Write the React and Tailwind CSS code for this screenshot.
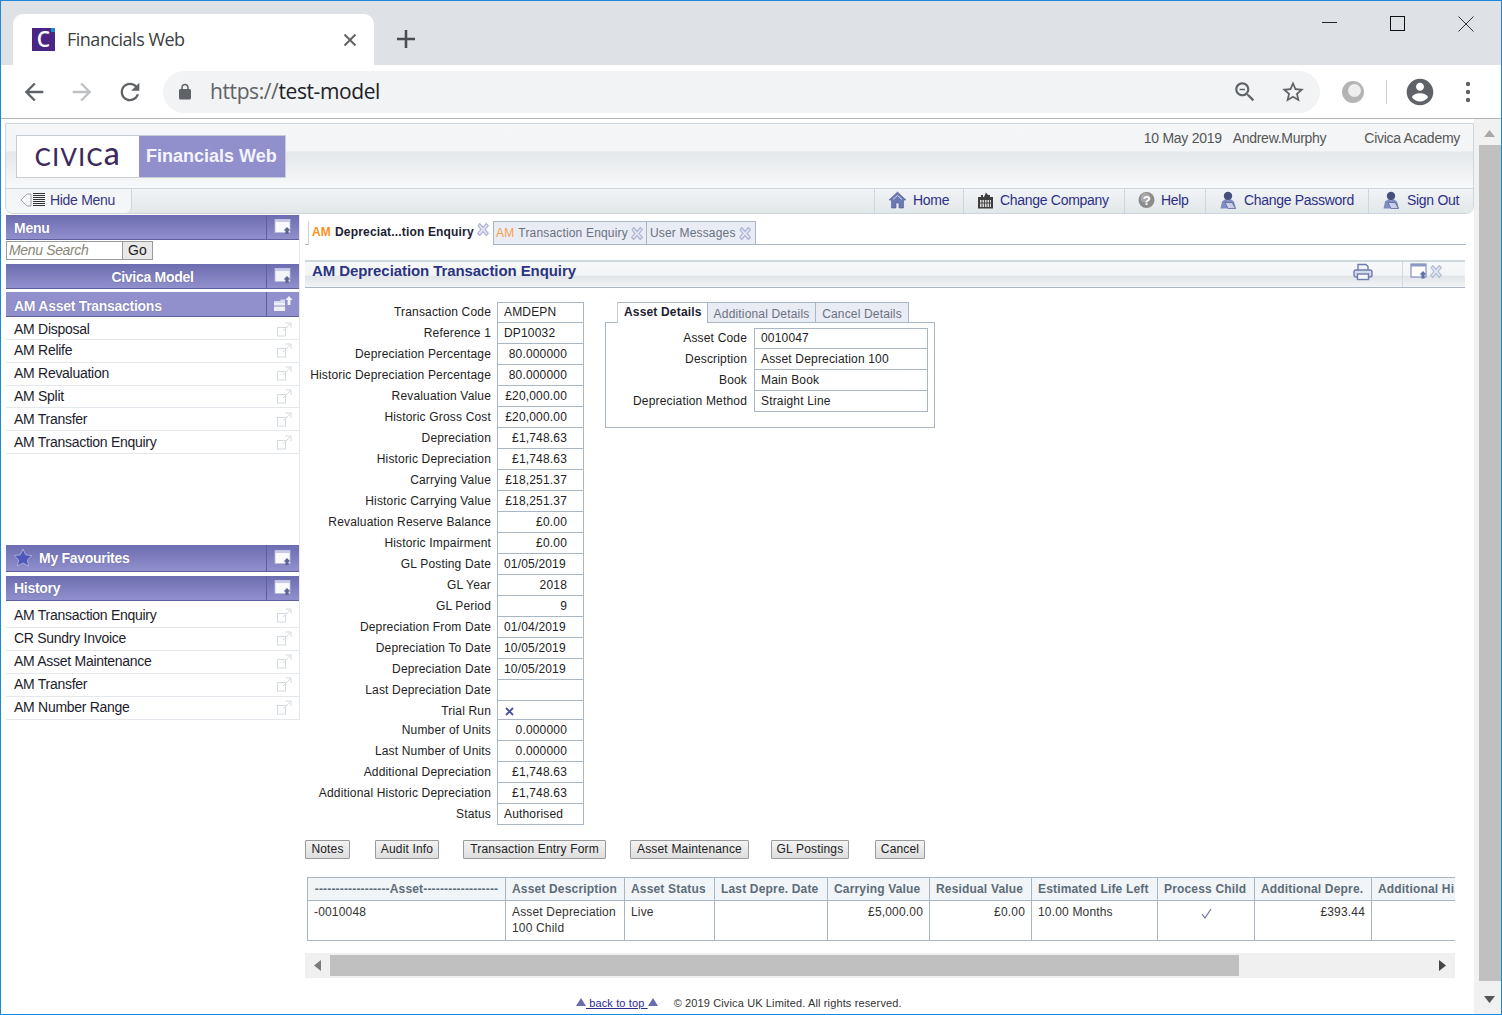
import React from "react";

const P = ({ d, c = "#5f6368", s = 24, className = "" }) => (
  <svg width={s} height={s} viewBox="0 0 24 24" className={className} fill={c}><path d={d} /></svg>
);
const paths = {
  back: "M20 11H7.83l5.59-5.59L12 4l-8 8 8 8 1.41-1.41L7.83 13H20v-2z",
  fwd: "M4 11h12.17l-5.59-5.59L12 4l8 8-8 8-1.41-1.41L16.17 13H4v-2z",
  reload: "M17.65 6.35C16.2 4.9 14.21 4 12 4c-4.42 0-7.99 3.58-7.99 8s3.57 8 7.99 8c3.73 0 6.84-2.55 7.73-6h-2.08c-.82 2.33-3.04 4-5.65 4-3.31 0-6-2.69-6-6s2.69-6 6-6c1.66 0 3.14.69 4.22 1.78L13 11h7V4l-2.35 2.35z",
  lock: "M18 8h-1V6c0-2.76-2.24-5-5-5S7 3.24 7 6v2H6c-1.1 0-2 .9-2 2v10c0 1.1.9 2 2 2h12c1.1 0 2-.9 2-2V10c0-1.1-.9-2-2-2zM9 6c0-1.66 1.34-3 3-3s3 1.34 3 3v2H9V6z",
  zoom: "M15.5 14h-.79l-.28-.27C15.41 12.59 16 11.11 16 9.5 16 5.91 13.09 3 9.5 3S3 5.91 3 9.5 5.91 16 9.5 16c1.61 0 3.09-.59 4.23-1.57l.27.28v.79l5 4.99L20.49 19l-4.99-5zm-6 0C7.01 14 5 11.99 5 9.5S7.01 5 9.5 5 14 7.01 14 9.5 11.99 14 9.5 14zM7 9h5v1.4H7z",
  star: "M22 9.24l-7.19-.62L12 2 9.19 8.63 2 9.24l5.46 4.73L5.82 21 12 17.27 18.18 21l-1.63-7.03L22 9.24zM12 15.4l-3.76 2.27 1-4.28-3.32-2.88 4.38-.38L12 6.1l1.71 4.04 4.38.38-3.32 2.88 1 4.28L12 15.4z",
  account: "M12 2C6.48 2 2 6.48 2 12s4.48 10 10 10 10-4.48 10-10S17.52 2 12 2zm0 3c1.66 0 3 1.34 3 3s-1.34 3-3 3-3-1.34-3-3 1.34-3 3-3zm0 14.2c-2.5 0-4.71-1.28-6-3.22.03-1.99 4-3.08 6-3.08 1.99 0 5.97 1.09 6 3.08-1.29 1.94-3.5 3.22-6 3.22z",
};

const WinIcon = ({ dark = false }) => (
  <svg width="18" height="18" viewBox="0 0 18 18">
    <rect x="1" y="1.5" width="15" height="13" fill={dark ? "#f4f5fb" : "#fbfbfe"} stroke="#b9bbdc" strokeWidth="0.8" />
    <rect x="1" y="1.5" width="15" height="2.6" fill="#c9cae6" />
    <path d="M13 9l3.5 3.5H14.6V16h-3.2v-3.5H9.5z" fill="#5f6496" />
  </svg>
);
const FolderUp = () => (
  <svg width="20" height="18" viewBox="0 0 20 18">
    <path d="M1 6h6l1-1.5h4V16H1z" fill="#d9dcec" />
    <path d="M1 8h11v8H1z" fill="#eef0f7" />
    <path d="M1 11h11" stroke="#8f92c0" />
    <path d="M16 1l3.6 4H17.4v5h-2.8V5h-2.2z" fill="#f3f4fb" />
  </svg>
);
const ExtIcon = () => (
  <svg width="15" height="15" viewBox="0 0 15 15" fill="none" stroke="#d3dae3" strokeWidth="1">
    <rect x="0.5" y="5.5" width="8" height="8.5" />
    <path d="M6 9l7.5-7.5M8.5 1H14v5" />
  </svg>
);
const CloseX = ({ c = "#a9afd0" }) => (
  <svg width="12" height="13" viewBox="0 0 11 12" fill="#e3e5f1" stroke={c} strokeWidth="1">
    <path d="M1 2.500l1.500-2L5.500 4l3-3.500 2 2L7.500 6l3 3.500-2 2L5.500 8l-3 3.500-2-2L3.500 6z" />
  </svg>
);

const NavIcon = ({ kind }) => {
  if (kind === "home")
    return (
      <svg width="19" height="18" viewBox="0 0 19 18">
        <path d="M9.500 1L1 9h2.500v8h4.500v-5h3v5h4.500V9H18z" fill="#6b79b4" stroke="#4f5c9a" strokeWidth="0.6" />
        <path d="M5 8.500l4.500-4 4.500 4" fill="none" stroke="#d5daf0" strokeWidth="1" />
      </svg>
    );
  if (kind === "company")
    return (
      <svg width="17" height="18" viewBox="0 0 17 18">
        <path d="M1 6h3V4h2V6h1l2-4.500L11 4h2v2h3v11.500H1z" fill="#3f3f3f" />
        <path d="M3 9h11v7H3z" fill="#d8d8d8" />
        <path d="M5 9v7M7.500 9v7M10 9v7M12.500 9v7M3 12h11" stroke="#3f3f3f" strokeWidth="0.9" />
      </svg>
    );
  if (kind === "help")
    return (
      <svg width="17" height="18" viewBox="0 0 17 18">
        <circle cx="8.500" cy="9" r="8" fill="#8b8b8b" />
        <circle cx="7.500" cy="7" r="5" fill="#a9a9a9" />
        <text x="8.500" y="13.500" textAnchor="middle" fontSize="13" fontWeight="700" fontFamily="Liberation Sans" fill="#fff">?</text>
      </svg>
    );
  return (
    <svg width="19" height="19" viewBox="0 0 19 19">
      <circle cx="9" cy="5" r="4.200" fill="#46507f" />
      <path d="M1.500 17.500l1.500-7 3.500-2.500 2.500 1.500L11.500 8l3.500 2.500 2 7z" fill="#7f8cc2" />
      <path d="M6 11.500h7l3.500 6H9z" fill="#c8cfe6" stroke="#46507f" strokeWidth="0.6" />
    </svg>
  );
};

const SideHead = ({ children, flat = false, center = false, icon, h = "h-[25px]", pt = "pt-[2px]" }) => (
  <div className={`${h} relative flex items-stretch border-b border-[#5e5f9c] text-white font-bold text-[14px] tracking-[-0.28px] ${flat ? "bg-[#9190cc]" : "bg-[linear-gradient(#6c6db0,#9190cd)]"}`}>
    <div className={`flex-1 flex items-center ${pt} ${center ? "justify-center pl-[33px]" : "pl-[8px]"} [text-shadow:0_0_1px_#55568f]`}>{children}</div>
    <div className="w-[33px] flex items-center justify-center border-l border-[#5e5f9c]">{icon || <WinIcon />}</div>
  </div>
);

const SideItem = ({ t, pt = "" }) => (
  <div className={`h-[23px] flex items-center justify-between pl-[8px] pr-[7px] ${pt} border-b border-[#e3e8ec] text-[14px] text-[#1c1c2c] tracking-[-0.28px]`}>
    <span>{t}</span>
    <ExtIcon />
  </div>
);

const rows = [
  ["Transaction Code", "AMDEPN", "l"],
  ["Reference 1", "DP10032", "l"],
  ["Depreciation Percentage", "80.000000", "r"],
  ["Historic Depreciation Percentage", "80.000000", "r"],
  ["Revaluation Value", "£20,000.00", "r"],
  ["Historic Gross Cost", "£20,000.00", "r"],
  ["Depreciation", "£1,748.63", "r"],
  ["Historic Depreciation", "£1,748.63", "r"],
  ["Carrying Value", "£18,251.37", "r"],
  ["Historic Carrying Value", "£18,251.37", "r"],
  ["Revaluation Reserve Balance", "£0.00", "r"],
  ["Historic Impairment", "£0.00", "r"],
  ["GL Posting Date", "01/05/2019", "l"],
  ["GL Year", "2018", "r"],
  ["GL Period", "9", "r"],
  ["Depreciation From Date", "01/04/2019", "l"],
  ["Depreciation To Date", "10/05/2019", "l"],
  ["Depreciation Date", "10/05/2019", "l"],
  ["Last Depreciation Date", "", "l"],
  ["Trial Run", "x", "x"],
  ["Number of Units", "0.000000", "r"],
  ["Last Number of Units", "0.000000", "r"],
  ["Additional Depreciation", "£1,748.63", "r"],
  ["Additional Historic Depreciation", "£1,748.63", "r"],
  ["Status", "Authorised", "l"],
];

const FormRow = ({ label, value, kind, first }) => (
  <div className={`flex ${kind === "x" ? "h-[19px]" : "h-[21px]"}`}>
    <div className={`w-[186px] text-right flex items-center justify-end whitespace-nowrap ${kind === "x" ? "" : "pb-[2px]"}`}>{label}</div>
    <div className={`ml-[6px] w-[87px] flex items-center border-x border-b border-[#a9b6c3] ${first ? "border-t" : ""} ${kind === "x" ? "" : "pb-[1px]"} ${kind === "r" ? "justify-end pr-[16px]" : "pl-[6px]"}`}>
      {kind === "x" ? (
        <svg width="9" height="9" viewBox="0 0 9 9" className="ml-[1px] mt-[3px]"><path d="M1 1l7 7M8 1L1 8" stroke="#4a4fa0" strokeWidth="1.800" /></svg>
      ) : value}
    </div>
  </div>
);

const details = [["Asset Code", "0010047"], ["Description", "Asset Depreciation 100"], ["Book", "Main Book"], ["Depreciation Method", "Straight Line"]];
const cols = [
  ["------------------Asset------------------", "w-[198px]", "text-center"],
  ["Asset Description", "w-[119px]", ""],
  ["Asset Status", "w-[90px]", ""],
  ["Last Depre. Date", "w-[113px]", ""],
  ["Carrying Value", "w-[102px]", ""],
  ["Residual Value", "w-[102px]", ""],
  ["Estimated Life Left", "w-[126px]", ""],
  ["Process Child", "w-[97px]", ""],
  ["Additional Depre.", "w-[117px]", ""],
  ["Additional Historic Depreciation", "w-[160px]", ""],
];
const td = "border border-[#a9b6c3] px-[6px] align-top pt-[3px] leading-[16px]";

export default function App() {
  return (
    <div className="w-[1502px] h-[1015px] overflow-hidden bg-white border border-[#1e88d8] flex flex-col font-['Liberation_Sans',Arial,sans-serif] text-[12px] text-[#222] tracking-[0.17px]">
      {/* browser tab strip */}
      <div className="h-[64px] shrink-0 bg-[#dee1e6] flex items-end pl-[12px] relative">
        <div className="w-[361px] h-[51px] bg-white rounded-t-[10px] flex items-center pl-[19px]">
          <div className="w-[23px] h-[23px] bg-[#4a2583] flex items-center justify-center relative">
            <span className="text-white font-semibold text-[21px] leading-none font-['Open_Sans',sans-serif]">C</span>
            <span className="absolute top-0 right-0 w-[4px] h-[4px] bg-[#1e88d8]"></span>
          </div>
          <span className="ml-[12px] text-[18px] text-[#3c4043] font-['Open_Sans',sans-serif] tracking-[-0.5px] whitespace-nowrap">Financials Web</span>
          <svg width="14" height="14" viewBox="0 0 14 14" className="ml-auto mr-[17px]"><path d="M1.500 1.500l11 11M12.500 1.500l-11 11" stroke="#5f6368" strokeWidth="2" /></svg>
        </div>
        <svg width="20" height="20" viewBox="0 0 20 20" className="ml-[22px] mb-[16px]"><path d="M10 1v18M1 10h18" stroke="#4a4d51" strokeWidth="2.600" /></svg>
        <div className="ml-auto self-start flex items-start mt-[13px]">
          <div className="w-[15px] h-[1px] bg-[#222] mt-[8px]"></div>
          <div className="w-[15px] h-[15px] border border-[#111] ml-[53px] mt-[2px]"></div>
          <svg width="16" height="16" viewBox="0 0 16 16" className="ml-[53px] mr-[27px] mt-[2px]"><path d="M.5.500l15 15M15.500.500l-15 15" stroke="#333" strokeWidth="1" /></svg>
        </div>
      </div>
      {/* toolbar */}
      <div className="h-[54px] shrink-0 bg-white border-b border-[#b4b4b4] flex items-center pl-[19px]">
        <P d={paths.back} s={28} />
        <P d={paths.fwd} s={28} c="#bdc1c6" className="ml-[20px]" />
        <P d={paths.reload} s={28} className="ml-[20px]" />
        <div className="ml-[19px] w-[1157px] h-[42px] rounded-full bg-[#f1f3f4] flex items-center pl-[13px]">
          <P d={paths.lock} s={18} />
          <span className="ml-[16px] pt-[1px] text-[21px] font-['Open_Sans',sans-serif] tracking-[-0.4px] text-[#5f6368]">https://<span className="text-[#202124]">test-model</span></span>
          <P d={paths.zoom} s={26} className="ml-auto" />
          <P d={paths.star} s={26} c="#5f6368" className="ml-[22px] mr-[14px]" />
        </div>
        <div className="ml-[22px] w-[22px] h-[22px] rounded-full bg-[#b4b4b4] flex items-center justify-center">
          <div className="w-[13px] h-[13px] rounded-full bg-[#eeeeee] ml-[3px] mb-[3px]"></div>
        </div>
        <div className="ml-[22px] w-[1px] h-[24px] bg-[#d0d0d0]"></div>
        <P d={paths.account} s={32} className="ml-[17px]" />
        <svg width="6" height="22" viewBox="0 0 6 22" className="ml-[29px]"><circle cx="3" cy="3" r="2.200" fill="#5f6368" /><circle cx="3" cy="11" r="2.200" fill="#5f6368" /><circle cx="3" cy="19" r="2.200" fill="#5f6368" /></svg>
      </div>
      {/* page */}
      <div className="flex-1 flex min-h-0">
        <div className="w-[1473px] pl-[4px] pt-[4px] flex flex-col">
          {/* app header */}
          <div className="h-[91px] shrink-0 border border-[#cdd6dc] rounded-b-[8px] overflow-hidden flex flex-col">
            <div className="h-[64px] flex justify-between bg-[linear-gradient(#f4f6f7_0%,#f3f5f6_42%,#e4e8eb_44%,#f8f9fa_100%)]">
              <div className="ml-[10px] mt-[11px] h-[43px] w-[270px] border border-[#c6cdd4] flex bg-white">
                <div className="w-[122px] flex items-center justify-center text-[#3c2a5e] font-['Lato',sans-serif] text-[24px] tracking-[1.4px] leading-none font-medium">CIVIC<span className="text-[32px] leading-none -mt-[7px]">a</span></div>
                <div className="flex-1 bg-[#9190cd] text-[#f4f4fb] font-bold text-[18px] flex items-center pl-[7px] tracking-[0px] whitespace-nowrap">Financials Web</div>
              </div>
              <div className="flex text-[14px] text-[#555] mt-[4px] mr-[13px] tracking-[-0.28px]">
                <span>10 May 2019</span><span className="ml-[11px]">Andrew.Murphy</span><span className="ml-[38px]">Civica Academy</span>
              </div>
            </div>
            <div className="h-[25px] flex justify-between items-stretch border-t border-[#cdd6dc] bg-[linear-gradient(#f2f4f6,#e2e7ea)] text-[14px] text-[#2d2f84] tracking-[-0.3px]">
              <div className="w-[126px] flex items-center pl-[14px] pb-[2px] border-r border-[#cdd6dc] rounded-br-[6px] bg-[linear-gradient(#f2f4f6,#f6f7f8)] text-[#37377f]">
                <svg width="26" height="16" viewBox="0 0 26 16">
                  <path d="M1 8l6-6h4v12H7z" fill="#f6f7f8" stroke="#9aa3ab" />
                  <path d="M13 1.500h12M13 3.500h12M13 5.500h12M13 7.500h12M13 9.500h12M13 11.500h12M13 13.500h12" stroke="#333" strokeWidth="1" />
                </svg>
                <span className="ml-[4px]">Hide Menu</span>
              </div>
              <div className="flex items-stretch">
                {[["home", "Home", "w-[89px]"], ["company", "Change Company", "w-[161px]"], ["help", "Help", "w-[81px]"], ["user", "Change Password", "w-[163px]"], ["user", "Sign Out", "w-[105px]"]].map(([k, t, w], i) => (
                  <div key={i} className={`${w} flex items-center pl-[13px] pb-[2px] border-l border-[#cdd6dc] gap-[6px] whitespace-nowrap`}>
                    <NavIcon kind={k} />
                    <span>{t}</span>
                  </div>
                ))}
              </div>
            </div>
          </div>
          <div className="flex flex-1 min-h-0">
            {/* sidebar */}
            <div className="w-[294px] ml-[1px] mt-[1px] shrink-0 border-r border-[#e3e8ec] self-start h-[505px] flex flex-col">
              <SideHead pt="pt-[3px]">Menu</SideHead>
              <div className="flex mt-[1px] h-[19px]">
                <div className="w-[117px] border border-[#9a9a9a] italic text-[14px] tracking-[-0.35px] text-[#8a8478] pl-[2px] pb-[2px] flex items-center leading-none">Menu Search</div>
                <div className="w-[30px] border border-[#9a9a9a] border-l-0 bg-[#e9e9e9] text-[14px] flex items-center justify-center pb-[1px]">Go</div>
              </div>
              <div className="mt-[4px]"><SideHead center icon={<WinIcon dark />}>Civica Model</SideHead></div>
              <div className="mt-[3px]"><SideHead flat pt="pt-[4px]" icon={<FolderUp />}>AM Asset Transactions</SideHead></div>
              {["AM Disposal", "AM Relife", "AM Revaluation", "AM Split", "AM Transfer", "AM Transaction Enquiry"].map((t, i) => <SideItem key={t} t={t} pt={i === 0 ? "pt-[2px]" : ""} />)}
              <div className="mt-[91px]">
                <SideHead h="h-[27px]">
                  <svg width="20" height="19" viewBox="0 0 20 19" className="-ml-[1px] mr-[6px] -mt-[2px]"><path d="M10 1l2.700 5.800 6.300.8-4.600 4.300 1.200 6.200L10 15l-5.600 3.100 1.200-6.200L1 7.600l6.300-.8z" fill="#4f58b8" stroke="#a9acd9" strokeWidth="1" /></svg>
                  My Favourites
                </SideHead>
              </div>
              <div className="mt-[4px]"><SideHead>History</SideHead></div>
              <div className="mt-[4px]">
                {["AM Transaction Enquiry", "CR Sundry Invoice", "AM Asset Maintenance", "AM Transfer", "AM Number Range"].map((t) => <SideItem key={t} t={t} />)}
              </div>
            </div>
            {/* main */}
            <div className="ml-[5px] w-[1161px] mt-[7px] flex flex-col">
              <div className="h-[24px] shrink-0 flex items-end border-b border-[#a9b6c3] pl-[3px]">
                <div className="w-[185px] h-[24px] bg-white border-l border-[#c8d0d8] -mb-[1px] flex items-start pt-[2px] pl-[3px] font-bold text-[#1d1d33] whitespace-nowrap">
                  <span className="text-[#f7931e]">AM</span><span className="ml-[4px]">Depreciat...tion Enquiry</span><span className="ml-[3px]"><CloseX /></span>
                </div>
                <div className="w-[154px] h-[23px] bg-[#e9ebf5] border border-b-0 border-[#a9b6c3] flex items-center pl-[2px] text-[#6a7280] whitespace-nowrap">
                  <span className="text-[#f7a24b]">AM</span><span className="ml-[4px]">Transaction Enquiry</span><span className="ml-[3px]"><CloseX /></span>
                </div>
                <div className="w-[109px] h-[23px] bg-[#e9ebf5] border border-l-0 border-b-0 border-[#a9b6c3] flex items-center pl-[3px] text-[#6a7280] whitespace-nowrap">
                  <span>User Messages</span><span className="ml-[3px]"><CloseX /></span>
                </div>
              </div>
              <div className="mt-[15px] h-[28px] w-[1160px] shrink-0 border-t-2 border-b border-[#cfd8dd] border-b-[#a9b6c3] bg-[linear-gradient(#f6f8f9,#f2f4f6_52%,#e2e6e9_58%,#f2f4f6)] flex items-center">
                <span className="ml-[7px] mb-[6px] text-[15px] font-bold text-[#2a3480] tracking-[-0.08px]">AM Depreciation Transaction Enquiry</span>
                <svg width="20" height="18" viewBox="0 0 20 18" className="ml-auto mb-[5px]" fill="none" stroke="#6e7db0" strokeWidth="1.400">
                  <path d="M5 7V1.500h8l2 2V7" fill="#f2f4f8" />
                  <rect x="1" y="7" width="18" height="7" rx="2" fill="#d5daea" />
                  <rect x="4.500" y="11" width="11" height="5.500" fill="#f6f7fb" />
                </svg>
                <div className="ml-[29px] w-[63px] h-full border-l border-[#cfd8dd] flex items-center pl-[7px] pb-[6px]">
                  <svg width="18" height="17" viewBox="0 0 18 17">
                    <rect x="1" y="1" width="15" height="13" fill="#fff" stroke="#6c7ab0" />
                    <rect x="1" y="1" width="15" height="2.500" fill="#8b97c4" />
                    <path d="M13 8l3.500 3.500h-1.900V15.500h-3.200v-4H9.500z" fill="#5f6fa8" />
                  </svg>
                  <span className="ml-[2px]"><CloseX c="#aeb9d0" /></span>
                </div>
              </div>
              {/* form and details */}
              <div className="mt-[14px] flex items-start shrink-0">
                <div>
                  {rows.map(([l, v, k], i) => <FormRow key={l} label={l} value={v} kind={k} first={i === 0} />)}
                </div>
                <div className="ml-[21px] w-[330px]">
                  <div className="h-[20px] flex pl-[12px]">
                    <div className="w-[90px] h-[21px] bg-white border-t border-l border-[#c8d0d8] border-t-[#a9b6c3] font-bold text-[#1d1d33] flex items-start pl-[6px] relative z-10 whitespace-nowrap">Asset Details</div>
                    <div className="w-[109px] bg-[#e9ebf5] border border-[#a9b6c3] border-b-0 text-[#6a7280] flex items-center justify-center pt-[3px] whitespace-nowrap">Additional Details</div>
                    <div className="w-[93px] bg-[#e9ebf5] border border-[#a9b6c3] border-b-0 border-l-0 text-[#6a7280] flex items-center justify-center pt-[3px] whitespace-nowrap">Cancel Details</div>
                  </div>
                  <div className="h-[106px] border border-[#a9b6c3] pt-[5px] pl-[5px]">
                    {details.map(([l, v], i) => (
                      <div key={l} className="flex h-[21px]">
                        <div className="w-[136px] flex items-center justify-end whitespace-nowrap pb-[2px]">{l}</div>
                        <div className={`ml-[7px] w-[174px] flex items-center pl-[6px] pb-[1px] border-x border-b border-[#a9b6c3] ${i === 0 ? "border-t" : ""}`}>{v}</div>
                      </div>
                    ))}
                  </div>
                </div>
              </div>
              {/* buttons */}
              <div className="mt-[15px] h-[19px] flex shrink-0">
                {[["Notes", "w-[45px]", ""], ["Audit Info", "w-[64px]", "ml-[25px]"], ["Transaction Entry Form", "w-[143px]", "ml-[24px]"], ["Asset Maintenance", "w-[119px]", "ml-[24px]"], ["GL Postings", "w-[78px]", "ml-[22px]"], ["Cancel", "w-[50px]", "ml-[26px]"]].map(([t, w, m]) => (
                  <div key={t} className={`${w} ${m} border border-[#9a9a9a] rounded-[1px] bg-[linear-gradient(#f3f3f3,#dedede)] flex items-center justify-center whitespace-nowrap pb-[1px]`}>{t}</div>
                ))}
              </div>
              {/* table */}
              <div className="mt-[18px] ml-[2px] w-[1148px] h-[64px] overflow-hidden shrink-0">
                <table className="border-collapse table-fixed w-[1224px]">
                  <thead>
                    <tr className="h-[23px] bg-[#f1f5f7]">
                      {cols.map(([t, w, a]) => (
                        <th key={t} className={`${w} ${a || "text-left"} border border-[#a9b6c3] px-[6px] pb-[1px] font-bold text-[#5d6c79] whitespace-nowrap overflow-hidden`}>{t}</th>
                      ))}
                    </tr>
                  </thead>
                  <tbody>
                    <tr className="h-[40px] text-[#333]">
                      <td className={td}>-0010048</td>
                      <td className={td}>Asset Depreciation 100 Child</td>
                      <td className={td}>Live</td>
                      <td className={td}></td>
                      <td className={`${td} text-right`}>£5,000.00</td>
                      <td className={`${td} text-right`}>£0.00</td>
                      <td className={td}>10.00 Months</td>
                      <td className={`${td} text-center`}>
                        <svg width="11" height="11" viewBox="0 0 11 11" className="inline-block mt-[1px]"><path d="M1 6l3 4 6-9" fill="none" stroke="#6a74b0" strokeWidth="1.200" /></svg>
                      </td>
                      <td className={`${td} text-right`}>£393.44</td>
                      <td className={td}></td>
                    </tr>
                  </tbody>
                </table>
              </div>
              {/* horizontal scrollbar */}
              <div className="mt-[12px] w-[1150px] h-[25px] bg-[#f0f0f0] flex items-center shrink-0">
                <svg width="7" height="11" viewBox="0 0 7 11" className="ml-[9px]"><path d="M7 0v11L0 5.500z" fill="#7a7a7a" /></svg>
                <div className="ml-[9px] w-[909px] h-[21px] bg-[#c0c0c0]"></div>
                <svg width="7" height="11" viewBox="0 0 7 11" className="ml-[200px]"><path d="M0 0v11l7-5.500z" fill="#444" /></svg>
              </div>
              {/* footer */}
              <div className="mt-[19px] flex items-center text-[11px] pl-[271px] leading-[13px] tracking-[0.13px]">
                <svg width="10" height="8" viewBox="0 0 10 8" className="-mt-[3px]"><path d="M5 0l5 8H0z" fill="#6a6cb0" /></svg>
                <span className="underline text-[#2b2a90] whitespace-pre"> back to top </span>
                <svg width="10" height="8" viewBox="0 0 10 8" className="-mt-[3px]"><path d="M5 0l5 8H0z" fill="#6a6cb0" /></svg>
                <span className="ml-[16px] text-[#333]">© 2019 Civica UK Limited. All rights reserved.</span>
              </div>
            </div>
          </div>
        </div>
        {/* vertical scrollbar */}
        <div className="w-[27px] bg-[#f1f1f1] flex flex-col items-center pl-[4px]">
          <svg width="11" height="7" viewBox="0 0 11 7" className="mt-[11px]"><path d="M5.500 0L11 7H0z" fill="#a8a8a8" /></svg>
          <div className="mt-[8px] w-[22px] h-[836px] bg-[#c0c0c0]"></div>
          <svg width="11" height="7" viewBox="0 0 11 7" className="mt-[15px]"><path d="M0 0h11L5.500 7z" fill="#555" /></svg>
        </div>
      </div>
    </div>
  );
}
